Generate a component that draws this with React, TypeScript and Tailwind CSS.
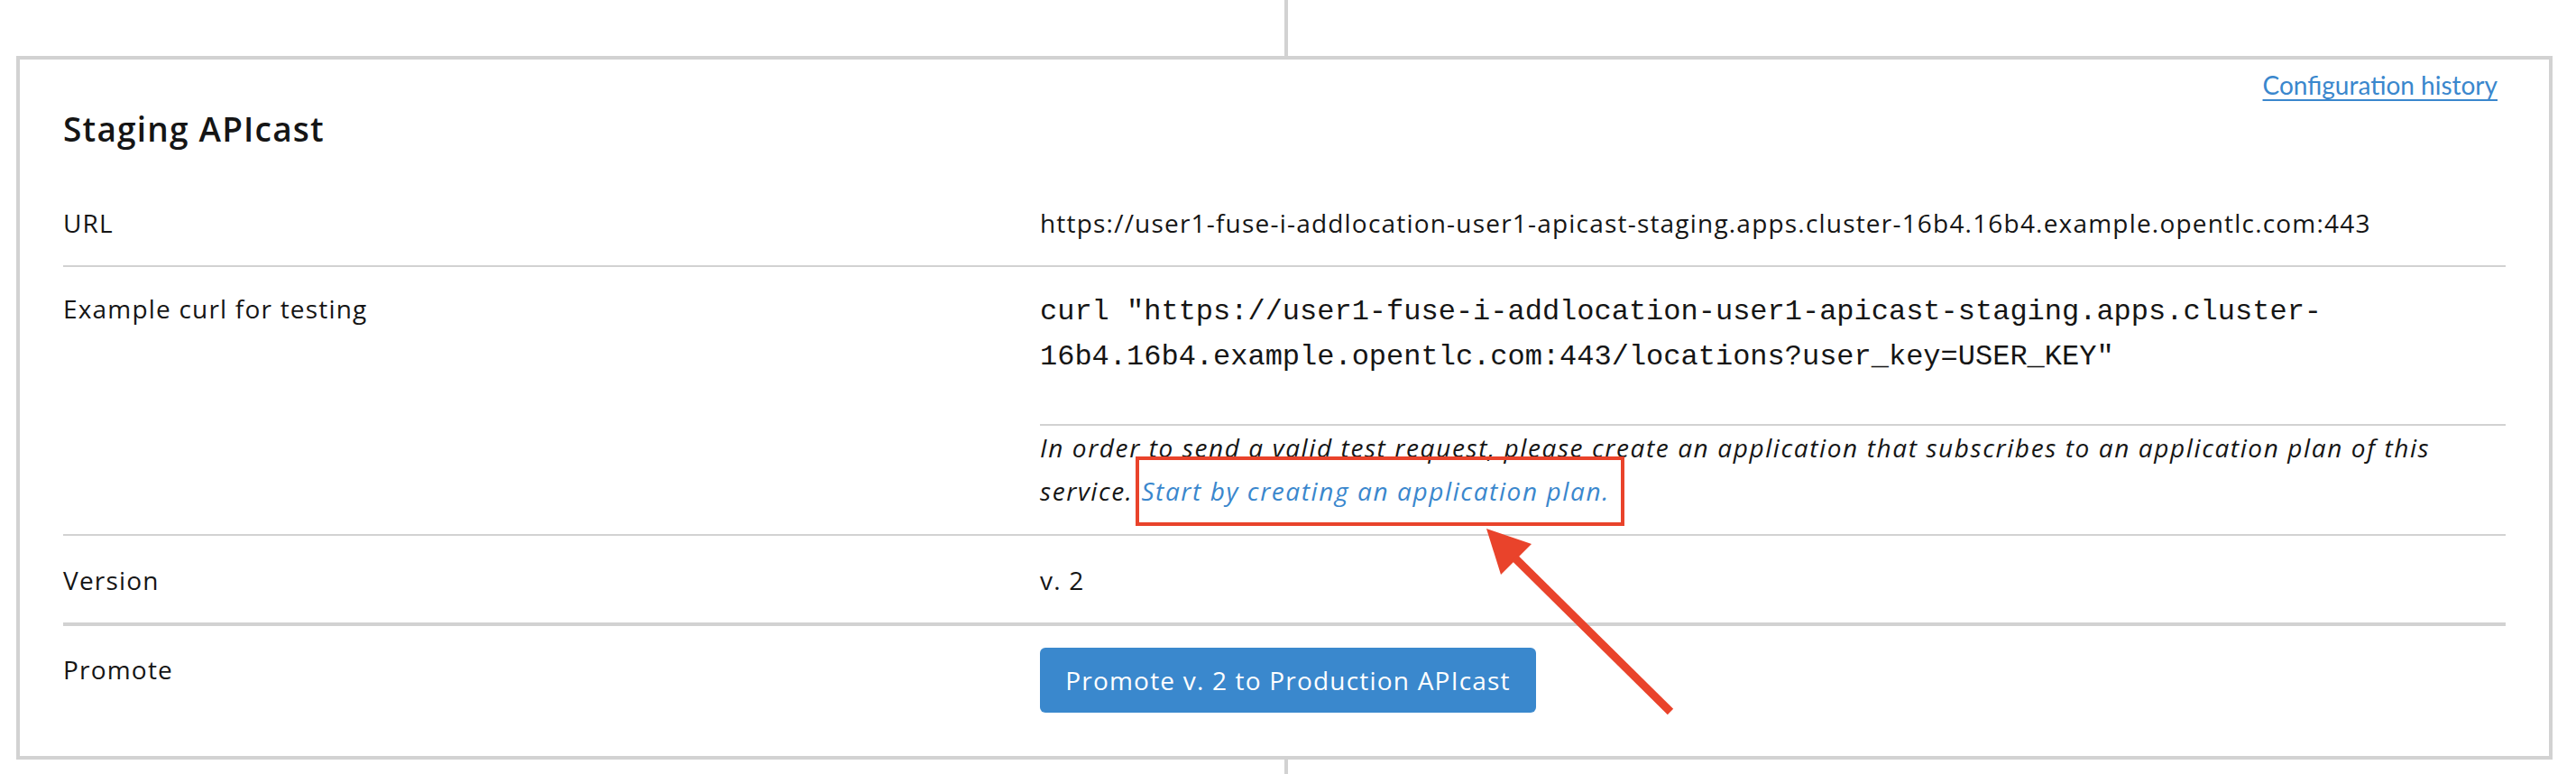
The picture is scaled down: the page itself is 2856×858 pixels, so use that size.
export default function App() {
  return (
    <div className="relative w-[2856px] h-[858px] overflow-hidden bg-white font-['Open_Sans',sans-serif] text-[#151515]">
      <div className="flex h-[62px]">
        <div className="ml-[1424px] h-full w-[4px] bg-[#d2d2d2]" />
      </div>
      <div className="ml-[18px] flex h-[780px] w-[2812px] flex-col border-4 border-[#d2d2d2] px-[48px]">
        <div className="flex justify-end pt-[7px] pr-[9px]">
          <a className="font-['Lato',sans-serif] text-[28px] leading-[42px] text-[#3a87cd] underline decoration-2 underline-offset-[5px]">
            Configuration history
          </a>
        </div>
        <h2 className="mt-[5px] text-[37px] leading-[46px] font-semibold tracking-[1.2px]">Staging APIcast</h2>

        <div className="mt-[34px] flex border-b-2 border-[#d2d2d2] py-[26px] text-[28px] leading-[42px] tracking-[1.2px]">
          <div className="w-[1083px] shrink-0">URL</div>
          <div>https://user1-fuse-i-addlocation-user1-apicast-staging.apps.cluster-16b4.16b4.example.opentlc.com:443</div>
        </div>

        <div className="flex border-b-2 border-[#d2d2d2] pt-[25px] text-[28px] leading-[42px]">
          <div className="w-[1083px] shrink-0 tracking-[1.2px]">Example curl for testing</div>
          <div className="flex min-w-0 flex-1 flex-col">
            <div className="border-b-2 border-[#d2d2d2] pb-[49px] font-['Liberation_Mono',monospace] text-[32px] leading-[50px]">
              curl "https://user1-fuse-i-addlocation-user1-apicast-staging.apps.cluster-16b4.16b4.example.opentlc.com:443/locations?user_key=USER_KEY"
            </div>
            <p className="pb-[24px] text-[28px] leading-[48px] italic tracking-[1.6px]">
              In order to send a valid test request, please create an application that subscribes to an application plan of this service.{" "}
              <a className="text-[#3a87cd]">Start by creating an application plan.</a>
            </p>
          </div>
        </div>

        <div className="flex border-b-4 border-[#d2d2d2] pt-[28px] pb-[26px] text-[28px] leading-[42px] tracking-[1.2px]">
          <div className="w-[1083px] shrink-0">Version</div>
          <div>v. 2</div>
        </div>

        <div className="flex items-start pt-[24px] text-[28px] leading-[42px] tracking-[1.2px]">
          <div className="mt-[3px] w-[1083px] shrink-0">Promote</div>
          <button className="flex h-[72px] w-[550px] items-center justify-center rounded-[6px] bg-[#3a88cd] text-[28px] tracking-[1.2px] text-white">
            Promote v. 2 to Production APIcast
          </button>
        </div>
      </div>
      <div className="flex h-[16px]">
        <div className="ml-[1424px] h-full w-[4px] bg-[#d2d2d2]" />
      </div>

      <div className="absolute left-[1259px] top-[506px] h-[77px] w-[542px] border-4 border-[#e9432b]" />
      <svg className="pointer-events-none absolute left-0 top-0" width="2856" height="858" viewBox="0 0 2856 858">
        <polygon points="1648,586 1664,637 1698,603" fill="#e9432b" />
        <line x1="1679" y1="618" x2="1852" y2="789" stroke="#e9432b" strokeWidth="9" />
      </svg>
    </div>
  );
}
